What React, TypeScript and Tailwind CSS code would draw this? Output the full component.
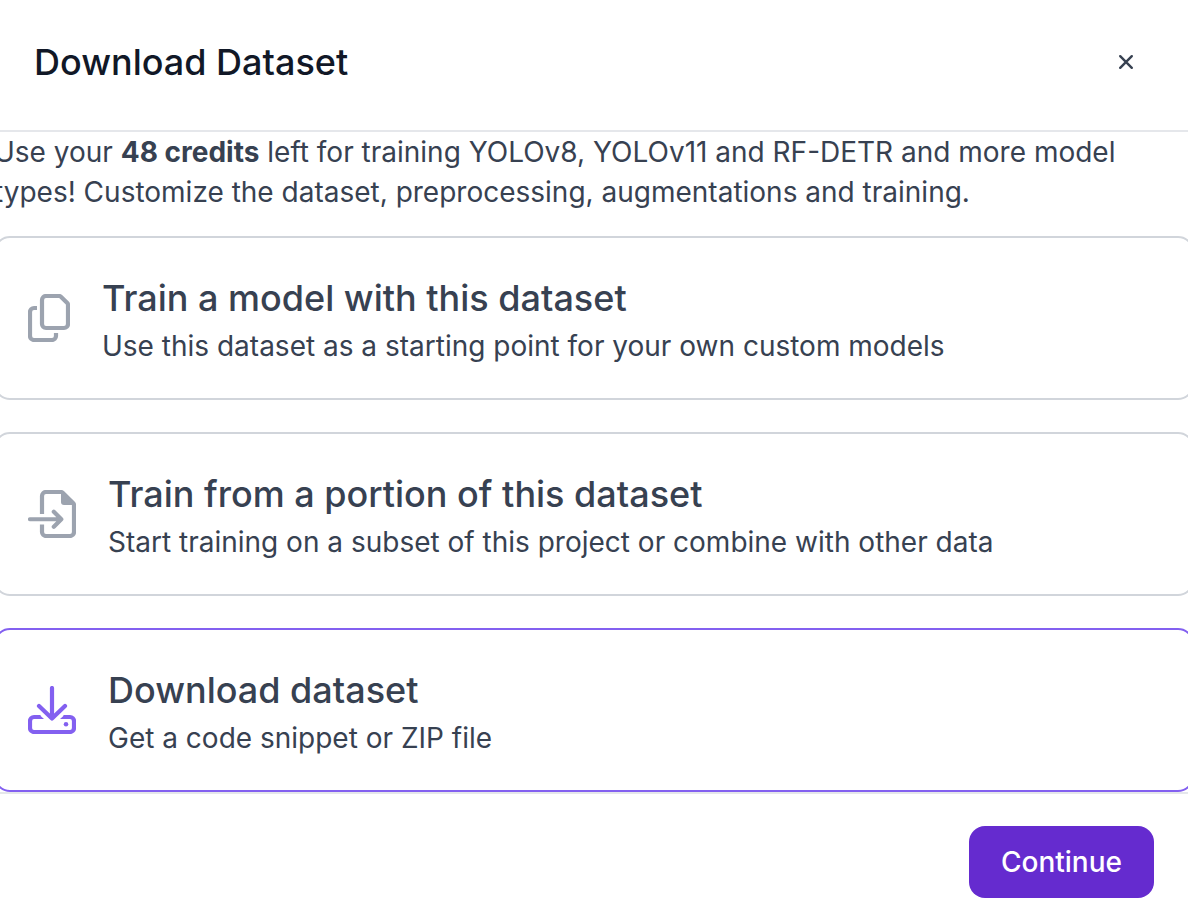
import { useState, type ReactNode } from "react";

const CopyIcon = () => (
  <svg className="h-12 w-[42px] shrink-0" viewBox="0 0 42 48" fill="none" stroke="currentColor" strokeWidth="4.2" aria-hidden="true">
    <path d="M18 2H31.2Q32.2 2 32.9 2.7L39.3 9.1Q40 9.8 40 10.8V30a4 4 0 0 1-4 4H18a4 4 0 0 1-4-4V6a4 4 0 0 1 4-4Z" />
    <path d="M9 14H6a4 4 0 0 0-4 4V42a4 4 0 0 0 4 4H24a4 4 0 0 0 4-4V39" />
  </svg>
);

const ImportIcon = () => (
  <svg className="size-12 shrink-0" viewBox="0 0 48 48" fill="none" stroke="currentColor" strokeWidth="4.2" aria-hidden="true">
    <path d="M14 24V6a4 4 0 0 1 4-4H33Q34 2 34.7 2.7L45.3 13.3Q46 14 46 15V42a4 4 0 0 1-4 4H18a4 4 0 0 1-4-4V34.5" />
    <path d="M33 1V12a3 3 0 0 0 3 3H47L34 1Z" fill="currentColor" stroke="none" />
    <path d="M2 29.25H32M25.8 21.75L33.3 29.25L25.8 36.75" strokeLinecap="round" strokeLinejoin="round" />
  </svg>
);

const DownloadIcon = () => (
  <svg className="size-12 shrink-0" viewBox="0 0 48 48" fill="none" stroke="currentColor" strokeWidth="4.2" aria-hidden="true">
    <path d="M24 2V32M11 20L24 32.6L37 20" strokeLinecap="round" strokeLinejoin="round" />
    <path d="M12.5 31H6a4 4 0 0 0-4 4V42a4 4 0 0 0 4 4H42a4 4 0 0 0 4-4V35a4 4 0 0 0-4-4H35.5" />
    <path d="M11.5 28.9L16 33.1H11.5ZM36.5 28.9L32 33.1H36.5Z" fill="currentColor" stroke="none" />
    <circle cx="38" cy="38.25" r="2.25" fill="currentColor" stroke="none" />
  </svg>
);

type Option = { id: string; title: string; detail: string; icon: ReactNode };

const options: Option[] = [
  {
    id: "train",
    title: "Train a model with this dataset",
    detail: "Use this dataset as a starting point for your own custom models",
    icon: <CopyIcon />,
  },
  {
    id: "portion",
    title: "Train from a portion of this dataset",
    detail: "Start training on a subset of this project or combine with other data",
    icon: <ImportIcon />,
  },
  {
    id: "download",
    title: "Download dataset",
    detail: "Get a code snippet or ZIP file",
    icon: <DownloadIcon />,
  },
];

export default function App() {
  const [selected, setSelected] = useState("download");

  return (
    <div className="overflow-x-hidden bg-white font-['Inter',sans-serif] text-gray-700 [font-optical-sizing:none]">
      <header className="flex items-center justify-between border-b-2 border-[#e5e7eb] px-[34px] pt-[34px] pb-10">
        <h1 className="text-[36px] leading-[56px] font-medium text-[#111827]">Download Dataset</h1>
        <button type="button" aria-label="Close" className="flex size-14 items-center justify-center text-[#374151]">
          <svg className="size-4" viewBox="0 0 16 16" fill="none" stroke="currentColor" strokeWidth="2.4" strokeLinecap="round" aria-hidden="true">
            <path d="M2.2 2.2L13.8 13.8M13.8 2.2L2.2 13.8" />
          </svg>
        </button>
      </header>

      <main className="-mx-1.5">
        <p className="text-[28px] leading-10 text-[#374151]">
          Use your <strong className="font-bold">48 credits</strong> left for training YOLOv8, YOLOv11 and RF-DETR and more
          model types! Customize the dataset, preprocessing, augmentations and training.
        </p>
        <div className="mt-6 flex flex-col gap-8">
          {options.map((option) => {
            const active = option.id === selected;
            return (
              <button
                key={option.id}
                type="button"
                aria-pressed={active}
                onClick={() => setSelected(option.id)}
                className={`flex items-center gap-8 rounded-2xl border-2 p-8 text-left ${
                  active ? "border-[#8360f0] text-[#8360f0]" : "border-[#d1d5db] text-[#9ca3af]"
                }`}
              >
                {option.icon}
                <span className="flex flex-col text-[#374151]">
                  <span className="text-[36px] leading-[56px] font-medium">{option.title}</span>
                  <span className="text-[28px] leading-10">{option.detail}</span>
                </span>
              </button>
            );
          })}
        </div>
      </main>

      <footer className="flex justify-end border-t-2 border-[#e5e7eb] px-[34px] pt-8 pb-6">
        <button type="button" className="rounded-2xl bg-[#652bcf] px-8 py-4 text-[28px] leading-10 font-medium text-white">
          Continue
        </button>
      </footer>
    </div>
  );
}
